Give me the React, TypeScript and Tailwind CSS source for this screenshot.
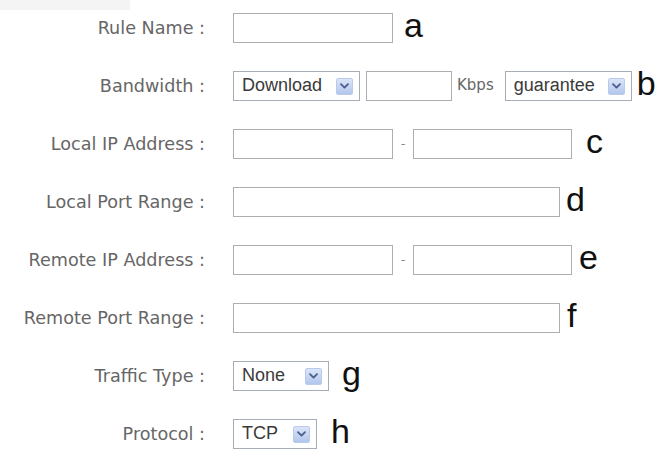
import React from 'react'

const labelFont = { fontFamily: '"DejaVu Sans", Verdana, sans-serif' }

function Arrow() {
  return (
    <span className="flex h-[17px] w-[17px] items-center justify-center rounded-[2px] border border-[#b9cbec] bg-gradient-to-b from-[#dbe5f8] to-[#b3c6ec]">
      <svg width="9" height="6" viewBox="0 0 9 6" fill="none">
        <path d="M1 1.2 L4.5 4.6 L8 1.2" stroke="#4b5f8a" strokeWidth="1.8" strokeLinecap="round" strokeLinejoin="round" />
      </svg>
    </span>
  )
}

function Select({ value, width }: { value: string; width: string }) {
  return (
    <div
      className={`flex h-[30px] ${width} shrink-0 items-center justify-between border border-[#a7adb6] bg-white pl-[8px] pr-[6px] text-[18px] leading-none text-[#3a3a3a]`}
      style={{ fontFamily: '"Liberation Sans", Arial, sans-serif' }}
    >
      <span className="-mt-[3px]">{value}</span>
      <Arrow />
    </div>
  )
}

function Input({ width }: { width: string }) {
  return <input type="text" className={`h-[30px] ${width} shrink-0 border border-[#aeaeae] bg-white outline-none`} />
}

function Letter({ ch, gap }: { ch: string; gap: string }) {
  return (
    <span
      className={`${gap} mb-[6px] text-[34px] leading-none text-[#111]`}
      style={{ fontFamily: '"Liberation Sans", Arial, sans-serif' }}
    >
      {ch}
    </span>
  )
}

function Dash() {
  return <span className="flex w-[20px] justify-center text-[13px] text-[#888]" style={labelFont}>-</span>
}

function Row({ label, children }: { label: string; children: React.ReactNode }) {
  return (
    <div className="flex h-[30px] items-center">
      <div className="w-[205px] shrink-0 text-right text-[17.6px] text-[#666]" style={labelFont}>
        {label}
      </div>
      <div className="ml-[28px] flex items-center">{children}</div>
    </div>
  )
}

export default function App() {
  return (
    <div className="relative h-[459px] w-[664px] overflow-hidden bg-white pt-[13px]">
      {/* faint scan shade in the corner */}
      <div className="absolute left-0 top-0 h-[10px] w-[130px] bg-[#f4f4f4]" />
      <div className="flex flex-col gap-[28px]">
        <Row label="Rule Name :">
          <Input width="w-[160px]" />
          <Letter ch="a" gap="ml-[11px]" />
        </Row>
        <Row label="Bandwidth :">
          <Select value="Download" width="w-[127px]" />
          <span className="ml-[6px]" />
          <Input width="w-[86px]" />
          <span className="ml-[5px] mb-[2px] text-[15px] text-[#666]" style={labelFont}>Kbps</span>
          <span className="ml-[11px]" />
          <Select value="guarantee" width="w-[127px]" />
          <Letter ch="b" gap="ml-[5px]" />
        </Row>
        <Row label="Local IP Address :">
          <Input width="w-[160px]" />
          <Dash />
          <Input width="w-[159px]" />
          <Letter ch="c" gap="ml-[14px]" />
        </Row>
        <Row label="Local Port Range :">
          <Input width="w-[327px]" />
          <Letter ch="d" gap="ml-[6px]" />
        </Row>
        <Row label="Remote IP Address :">
          <Input width="w-[160px]" />
          <Dash />
          <Input width="w-[159px]" />
          <Letter ch="e" gap="ml-[7px]" />
        </Row>
        <Row label="Remote Port Range :">
          <Input width="w-[327px]" />
          <Letter ch="f" gap="ml-[7px]" />
        </Row>
        <Row label="Traffic Type :">
          <Select value="None" width="w-[96px]" />
          <Letter ch="g" gap="ml-[13px]" />
        </Row>
        <Row label="Protocol :">
          <Select value="TCP" width="w-[84px]" />
          <Letter ch="h" gap="ml-[14px]" />
        </Row>
      </div>
    </div>
  )
}
